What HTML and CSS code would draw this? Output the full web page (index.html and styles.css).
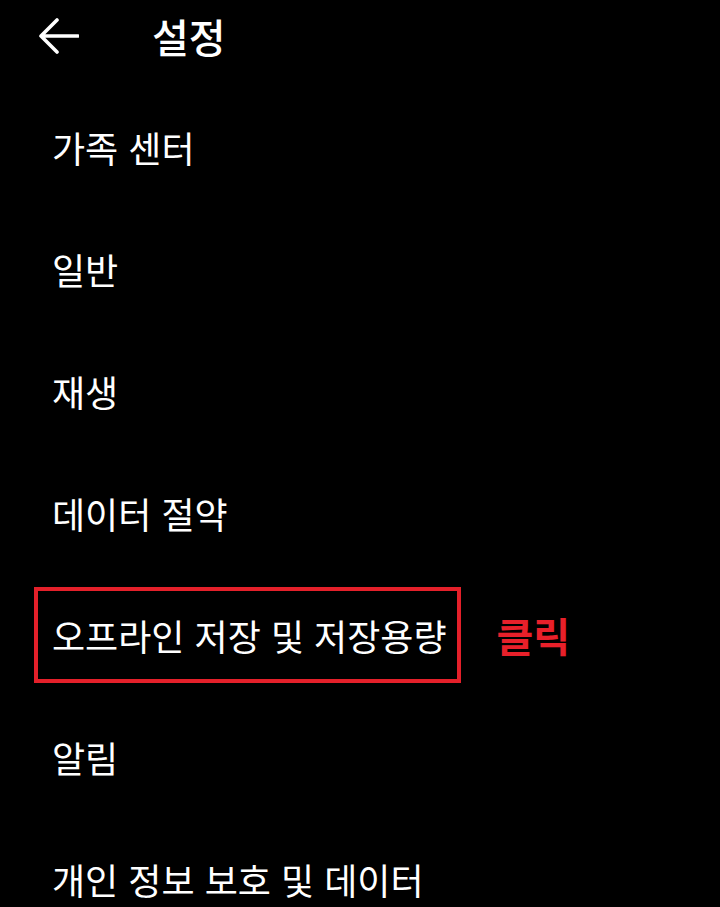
FILE: index.html
```
<!DOCTYPE html>
<html lang="ko">
<head>
<meta charset="utf-8">
<title>설정</title>
<link rel="stylesheet" href="styles.css">
</head>
<body>
<header class="topbar">
  <span class="back" aria-label="뒤로">
    <svg width="40" height="36" viewBox="0 0 40 36"><path d="M2 18 H39 M18 2 L2 18 L18 34" fill="none" stroke="#fff" stroke-width="3.6" stroke-linecap="round" stroke-linejoin="round"/></svg>
  </span>
  <h1 class="title">설정</h1>
</header>
<ul class="menu">
  <li class="item">가족 센터</li>
  <li class="item">일반</li>
  <li class="item">재생</li>
  <li class="item">데이터 절약</li>
  <li class="item item-marked"><span class="mark">오프라인 저장 및 저장용량</span><span class="note">클릭</span></li>
  <li class="item">알림</li>
  <li class="item">개인 정보 보호 및 데이터</li>
</ul>
</body>
</html>
```
FILE: styles.css
```
html, body {
  margin: 0;
  padding: 0;
  background: #000;
  color: #fff;
  font-family: "Noto Sans CJK KR", "Noto Sans", sans-serif;
  overflow: hidden;
}
.topbar {
  display: flex;
  align-items: center;
  height: 72px;
  padding-left: 39px;
}
.back {
  display: flex;
  width: 40px;
  height: 36px;
}
.title {
  margin: 0 0 0 73px;
  font-size: 40px;
  font-weight: 500;
  line-height: 1;
}
.menu {
  list-style: none;
  margin: 0;
  padding: 14px 0 0 0;
}
.item {
  display: flex;
  align-items: center;
  height: 122px;
  padding-left: 52px;
  font-size: 36px;
  line-height: 1;
}
.item-marked {
  padding-left: 34px;
}
.mark {
  display: flex;
  align-items: center;
  height: 88px;
  padding: 0 10px 0 14px;
  border: 4px solid #e4202a;
}
.note {
  margin-left: 36px;
  color: #e8202a;
  font-weight: 700;
  font-size: 40px;
}
```
